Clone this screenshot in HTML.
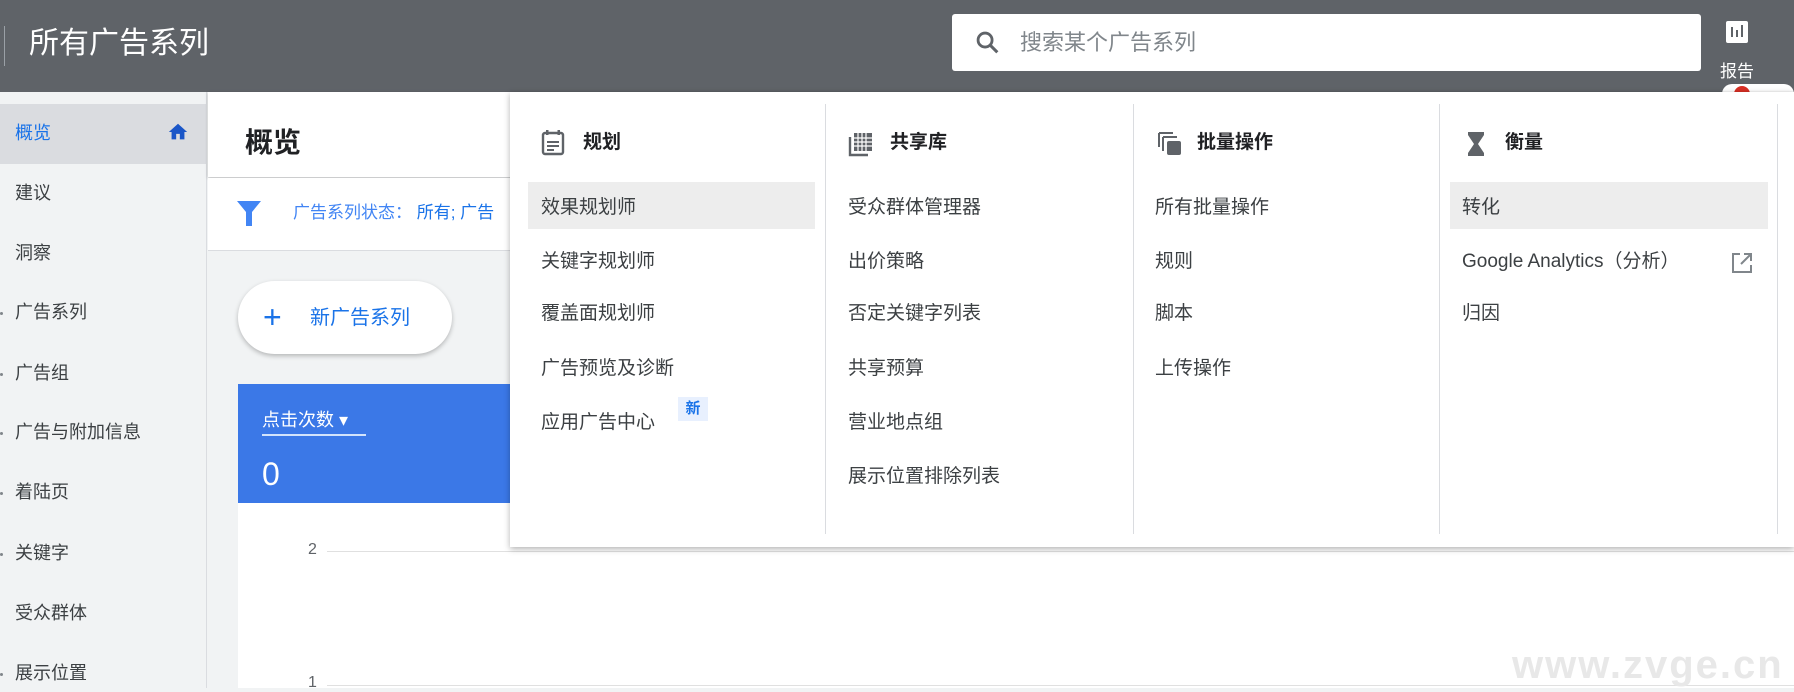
<!DOCTYPE html>
<html><head><meta charset="utf-8"><style>
*{margin:0;padding:0;box-sizing:border-box}
body{width:1794px;height:688px;overflow:hidden;position:relative;background:#f1f3f4;font-family:"Liberation Sans","Noto Sans CJK SC",sans-serif;color:#202124}
.abs{position:absolute}
.hdr{left:0;top:0;width:1794px;height:92px;background:#5f6368}
.side{left:0;top:92px;width:207px;height:596px;background:#f1f3f4;border-right:1px solid #dadce0}
.si{position:absolute;left:15px;font-size:18px;color:#3c4043;line-height:24px}
.dot{position:absolute;left:0;width:3px;height:3px;background:#80868b;border-radius:50%}
.mi{position:absolute;font-size:19px;color:#3c4043;line-height:24px;white-space:nowrap}
.mh{position:absolute;top:131px;font-size:19px;font-weight:bold;color:#202124;line-height:24px}
.vd{position:absolute;top:104px;width:1px;height:430px;background:#dadce0}
</style></head><body>
<div class="abs hdr"></div>
<div class="abs" style="left:4px;top:26px;width:1px;height:40px;background:#9aa0a6"></div>
<div class="abs" style="left:29px;top:24px;font-size:30px;color:#fff;line-height:40px">所有广告系列</div>
<div class="abs" style="left:952px;top:14px;width:749px;height:57px;background:#fff;border-radius:3px"></div>
<svg class="abs" style="left:974px;top:29px" width="28" height="28" viewBox="0 0 24 24"><circle cx="9.5" cy="9.5" r="6" fill="none" stroke="#5f6368" stroke-width="2.4"/><path d="M14 14l6 6" stroke="#5f6368" stroke-width="2.6"/></svg>
<div class="abs" style="left:1020px;top:29px;font-size:22px;color:#80868b;line-height:28px">搜索某个广告系列</div>
<div class="abs" style="left:1726px;top:21px;width:22px;height:22px;background:#fff;border-radius:2px"></div>
<div class="abs" style="left:1731px;top:27px;width:2px;height:10px;background:#5f6368"></div>
<div class="abs" style="left:1736px;top:30px;width:2px;height:7px;background:#5f6368"></div>
<div class="abs" style="left:1741px;top:25px;width:2px;height:12px;background:#5f6368"></div>
<div class="abs" style="left:1720px;top:57px;font-size:17px;color:#fff">报告</div>
<div class="abs" style="left:1722px;top:84px;width:72px;height:20px;background:#fff;border-radius:10px"></div>
<div class="abs" style="left:1734px;top:86px;width:16px;height:16px;background:#d93025;border-radius:50%"></div>

<div class="abs side"></div>
<div class="abs" style="left:0;top:104px;width:207px;height:60px;background:#dadce0"></div>
<div class="si" style="top:121px;color:#1a73e8">概览</div>
<svg class="abs" style="left:167px;top:121px" width="22" height="22" viewBox="0 0 24 24"><path d="M10 20v-6h4v6h5v-8h3L12 3 2 12h3v8z" fill="#1a56c8"/></svg>
<div class="si" style="top:181px">建议</div>
<div class="si" style="top:241px">洞察</div>
<div class="dot" style="top:312px"></div><div class="si" style="top:300px">广告系列</div>
<div class="dot" style="top:373px"></div><div class="si" style="top:361px">广告组</div>
<div class="dot" style="top:432px"></div><div class="si" style="top:420px">广告与附加信息</div>
<div class="dot" style="top:492px"></div><div class="si" style="top:480px">着陆页</div>
<div class="dot" style="top:553px"></div><div class="si" style="top:541px">关键字</div>
<div class="si" style="top:601px">受众群体</div>
<div class="dot" style="top:673px"></div><div class="si" style="top:661px">展示位置</div>

<div class="abs" style="left:208px;top:92px;width:1586px;height:85px;background:#fff;box-shadow:0 1px 3px rgba(0,0,0,.25)"></div>
<div class="abs" style="left:245px;top:127px;font-size:28px;font-weight:bold;line-height:32px">概览</div>
<div class="abs" style="left:208px;top:178px;width:1586px;height:73px;background:#fff;border-bottom:1px solid #dadce0"></div>
<svg class="abs" style="left:236px;top:200px" width="26" height="28" viewBox="0 0 26 28"><path d="M1 1h24l-9 11v14h-6V12z" fill="#4285f4"/></svg>
<div class="abs" style="left:293px;top:202px;font-size:17px;color:#4285f4;line-height:22px">广告系列状态： <span style="color:#1a73e8">所有; 广告</span></div>

<div class="abs" style="left:238px;top:281px;width:214px;height:73px;background:#fff;border-radius:37px;box-shadow:0 2px 5px rgba(0,0,0,.25)"></div>
<div class="abs" style="left:263px;top:303px;font-size:32px;color:#1a73e8;line-height:28px">+</div>
<div class="abs" style="left:310px;top:306px;font-size:20px;color:#1a73e8;line-height:24px">新广告系列</div>

<div class="abs" style="left:238px;top:384px;width:1556px;height:119px;background:#3b78e7"></div>
<div class="abs" style="left:262px;top:408px;font-size:18px;color:#fff;line-height:24px">点击次数 ▾</div>
<div class="abs" style="left:262px;top:434px;width:104px;height:2px;background:#d2e3fc"></div>
<div class="abs" style="left:262px;top:456px;font-size:32px;color:#fff;line-height:36px">0</div>
<div class="abs" style="left:238px;top:503px;width:1556px;height:185px;background:#fff"></div>
<div class="abs" style="left:308px;top:541px;font-size:16px;color:#5f6368">2</div>
<div class="abs" style="left:327px;top:551px;width:1467px;height:1px;background:#e0e0e0"></div>
<div class="abs" style="left:308px;top:674px;font-size:16px;color:#5f6368">1</div>
<div class="abs" style="left:327px;top:685px;width:1467px;height:1px;background:#e0e0e0"></div>
<div class="abs" style="left:1512px;top:643px;font-size:40px;font-weight:bold;color:#e8e8e8;letter-spacing:2px">www.zvge.cn</div>

<div class="abs" style="left:510px;top:92px;width:1284px;height:455px;background:#fff;box-shadow:0 2px 6px rgba(0,0,0,.3)"></div>
<div class="vd" style="left:825px"></div>
<div class="vd" style="left:1133px"></div>
<div class="vd" style="left:1439px"></div>
<div class="vd" style="left:1777px"></div>

<svg class="abs" style="left:541px;top:130px" width="24" height="26" viewBox="0 0 24 26"><rect x="2" y="3" width="20" height="21" rx="2" fill="none" stroke="#5f6368" stroke-width="2.4"/><rect x="5" y="0" width="2.5" height="5" fill="#5f6368"/><rect x="16.5" y="0" width="2.5" height="5" fill="#5f6368"/><path d="M6 12h12M6 16h12M6 20h7" stroke="#5f6368" stroke-width="2"/></svg>
<div class="mh" style="left:583px">规划</div>
<div class="abs" style="left:528px;top:182px;width:287px;height:47px;background:#ededed"></div>
<div class="mi" style="left:541px;top:196px">效果规划师</div>
<div class="mi" style="left:541px;top:250px">关键字规划师</div>
<div class="mi" style="left:541px;top:302px">覆盖面规划师</div>
<div class="mi" style="left:541px;top:357px">广告预览及诊断</div>
<div class="mi" style="left:541px;top:411px">应用广告中心</div>
<div class="abs" style="left:678px;top:397px;width:30px;height:24px;background:#e8f0fe;color:#1a73e8;font-size:15px;font-weight:bold;text-align:center;line-height:24px">新</div>

<svg class="abs" style="left:848px;top:131px" width="26" height="26" viewBox="0 0 26 26"><path d="M2 6v18h18" fill="none" stroke="#5f6368" stroke-width="2.4"/><rect x="6" y="2" width="18" height="18" fill="#5f6368"/><path d="M10 2v18M14 2v18M18 2v18M6 7h18M6 11h18M6 15h18" stroke="#fff" stroke-width="1.2"/></svg>
<div class="mh" style="left:890px">共享库</div>
<div class="mi" style="left:848px;top:196px">受众群体管理器</div>
<div class="mi" style="left:848px;top:250px">出价策略</div>
<div class="mi" style="left:848px;top:302px">否定关键字列表</div>
<div class="mi" style="left:848px;top:357px">共享预算</div>
<div class="mi" style="left:848px;top:411px">营业地点组</div>
<div class="mi" style="left:848px;top:465px">展示位置排除列表</div>

<svg class="abs" style="left:1157px;top:131px" width="26" height="26" viewBox="0 0 26 26"><path d="M2 2h14M2 2v14M6 6h14M6 6v14" fill="none" stroke="#5f6368" stroke-width="2"/><rect x="10" y="10" width="14" height="14" rx="2" fill="#5f6368"/></svg>
<div class="mh" style="left:1197px">批量操作</div>
<div class="mi" style="left:1155px;top:196px">所有批量操作</div>
<div class="mi" style="left:1155px;top:250px">规则</div>
<div class="mi" style="left:1155px;top:302px">脚本</div>
<div class="mi" style="left:1155px;top:357px">上传操作</div>

<svg class="abs" style="left:1467px;top:131px" width="18" height="26" viewBox="0 0 18 26"><path d="M1 1h16v3l-6 9 6 9v3H1v-3l6-9-6-9z" fill="#5f6368"/></svg>
<div class="mh" style="left:1505px">衡量</div>
<div class="abs" style="left:1450px;top:182px;width:318px;height:47px;background:#ededed"></div>
<div class="mi" style="left:1462px;top:196px">转化</div>
<div class="mi" style="left:1462px;top:250px">Google Analytics（分析）</div>
<svg class="abs" style="left:1730px;top:251px" width="24" height="24" viewBox="0 0 24 24"><path d="M10 3H3v18h18v-7" fill="none" stroke="#80868b" stroke-width="2"/><path d="M14 3h7v7M21 3L11 13" fill="none" stroke="#80868b" stroke-width="2"/></svg>
<div class="mi" style="left:1462px;top:302px">归因</div>
</body></html>
